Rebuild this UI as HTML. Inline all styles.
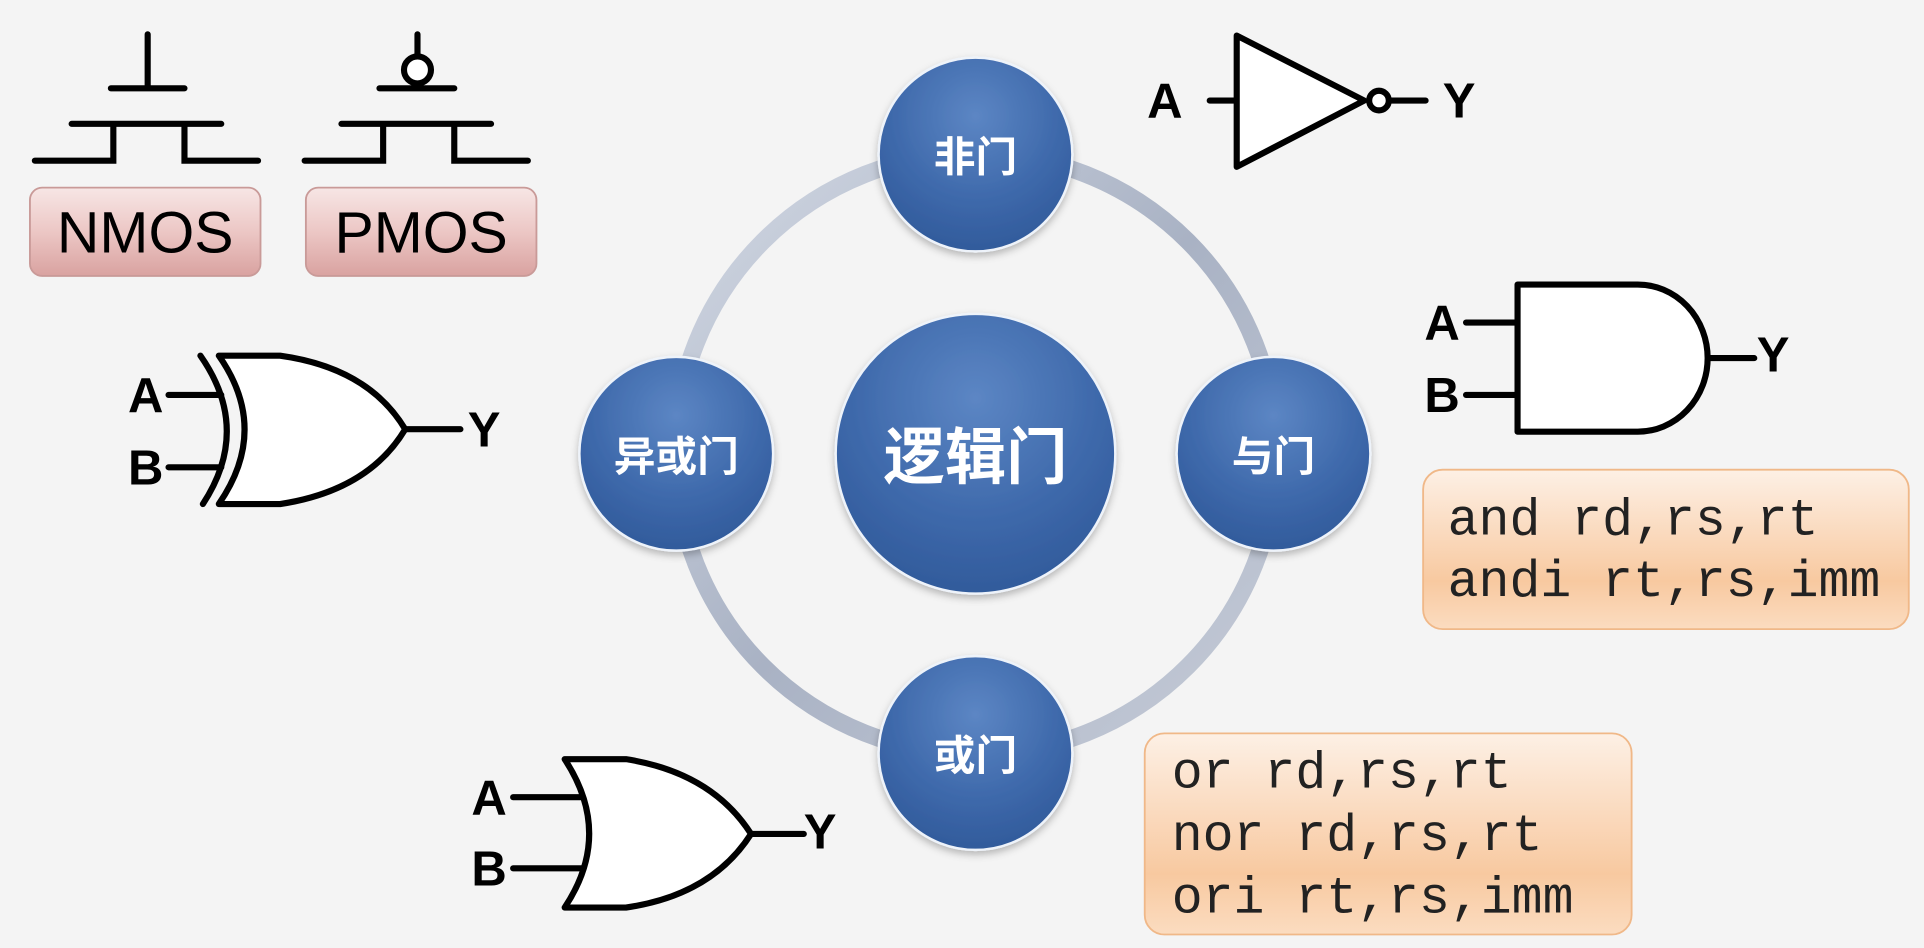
<!DOCTYPE html>
<html><head><meta charset="utf-8"><style>
html,body{margin:0;padding:0;background:#f4f4f4;}
svg{display:block}
</style></head><body>
<svg width="1924" height="948" viewBox="0 0 1568 773" xmlns="http://www.w3.org/2000/svg">
<defs>
<linearGradient id="pink" x1="0" y1="0" x2="0" y2="1"><stop offset="0" stop-color="#f7e6e5"/><stop offset="0.5" stop-color="#ecc7c5"/><stop offset="1" stop-color="#d9a2a0"/></linearGradient>
<linearGradient id="orange" x1="0" y1="0" x2="0" y2="1"><stop offset="0" stop-color="#fdf0e5"/><stop offset="0.7" stop-color="#f8c9a0"/><stop offset="1" stop-color="#fbdcc0"/></linearGradient>
<radialGradient id="blue" cx="0.5" cy="0.3" r="0.75"><stop offset="0" stop-color="#5c86c4"/><stop offset="0.6" stop-color="#3d68aa"/><stop offset="1" stop-color="#2f5898"/></radialGradient>
<linearGradient id="ring" x1="0" y1="0" x2="1" y2="1"><stop offset="0" stop-color="#d3d9e4"/><stop offset="0.5" stop-color="#a9b2c4"/><stop offset="1" stop-color="#c6ccd8"/></linearGradient>
<filter id="sh" x="-20%" y="-20%" width="140%" height="140%"><feDropShadow dx="0" dy="3" stdDeviation="3" flood-color="#000" flood-opacity="0.25"/></filter>
</defs>
<rect width="1568" height="773" fill="#f4f4f4"/>

<g stroke="#000" stroke-width="5" fill="none" stroke-linecap="round" stroke-linejoin="miter">
<path d="M120 28 V72 M90 72 H150 M58 101 H180 M28 131 H92 V101 M150 101 V131 H210"/>
<path d="M340 28 V45 M309 72 H370 M278 101 H400 M248 131 H312 V101 M370 101 V131 H430"/>
<circle cx="340" cy="57" r="11" fill="#fff"/>
</g>
<rect x="24" y="153" width="188" height="72" rx="10" fill="url(#pink)" stroke="#c99a98" stroke-width="1.5"/>
<text x="118" y="206" font-family="Liberation Sans, sans-serif" font-size="48" text-anchor="middle" fill="#000">NMOS</text>
<rect x="249" y="153" width="188" height="72" rx="10" fill="url(#pink)" stroke="#c99a98" stroke-width="1.5"/>
<text x="343" y="206" font-family="Liberation Sans, sans-serif" font-size="48" text-anchor="middle" fill="#000">PMOS</text>

<circle cx="795" cy="370" r="245" fill="none" stroke="url(#ring)" stroke-width="14"/>
<g filter="url(#sh)" stroke="#eef3fa" stroke-width="2">
<circle cx="795" cy="370" r="114" fill="url(#blue)"/>
<circle cx="795" cy="126" r="79" fill="url(#blue)"/>
<circle cx="1038" cy="370" r="79" fill="url(#blue)"/>
<circle cx="795" cy="614" r="79" fill="url(#blue)"/>
<circle cx="551" cy="370" r="79" fill="url(#blue)"/>
</g>
<g font-family="Liberation Sans, Noto Sans CJK SC, sans-serif" font-weight="bold" fill="#fff" text-anchor="middle">
<text x="795" y="390" font-size="50">逻辑门</text>
<text x="795" y="140" font-size="34">非门</text>
<text x="1038" y="384" font-size="34">与门</text>
<text x="795" y="628" font-size="34">或门</text>
<text x="551" y="384" font-size="34">异或门</text>
</g>

<g stroke="#000" stroke-width="5" fill="#fff" stroke-linejoin="round" stroke-linecap="round">
<path d="M986 82 H1008 M1133 82 H1162" fill="none"/>
<path d="M1008 29 L1112 82 L1008 136 Z"/>
<circle cx="1124" cy="82" r="8"/>
<path d="M1195 263 H1237 M1195 322 H1237 M1392 292 H1430" fill="none"/>
<path d="M1237 232 H1335 A57 60 0 0 1 1335 352 H1237 Z"/>
<path d="M137 322 H180 M137 381 H180 M330 350 H375" fill="none"/>
<path d="M163 290 Q205 350 165 411" fill="none"/>
<path d="M178 290 H228 Q300 300 330 350 Q300 400 228 411 H178 Q220 350 178 290 Z"/>
<path d="M418 650 H475 M418 708 H475 M612 680 H655" fill="none"/>
<path d="M460 619 H510 Q580 630 612 680 Q580 730 510 740 H460 Q500 680 460 619 Z"/>
</g>
<g font-family="Liberation Sans, sans-serif" font-weight="bold" font-size="40" fill="#000">
<text x="935" y="96">A</text><text x="1176" y="96">Y</text>
<text x="1161" y="277">A</text><text x="1161" y="336">B</text><text x="1432" y="303">Y</text>
<text x="104" y="336">A</text><text x="104" y="395">B</text><text x="381" y="364">Y</text>
<text x="384" y="664">A</text><text x="384" y="722">B</text><text x="655" y="692">Y</text>
</g>

<rect x="1160" y="383" width="396" height="130" rx="16" fill="url(#orange)" stroke="#f0b888" stroke-width="1.5"/>
<rect x="933" y="598" width="397" height="164" rx="16" fill="url(#orange)" stroke="#f0b888" stroke-width="1.5"/>
<g font-family="Liberation Mono, monospace" font-size="42" fill="#222" xml:space="preserve">
<text x="1180" y="436">and rd,rs,rt</text>
<text x="1180" y="486">andi rt,rs,imm</text>
<text x="955" y="642">or rd,rs,rt</text>
<text x="955" y="693">nor rd,rs,rt</text>
<text x="955" y="744">ori rt,rs,imm</text>
</g>
</svg>
</body></html>
